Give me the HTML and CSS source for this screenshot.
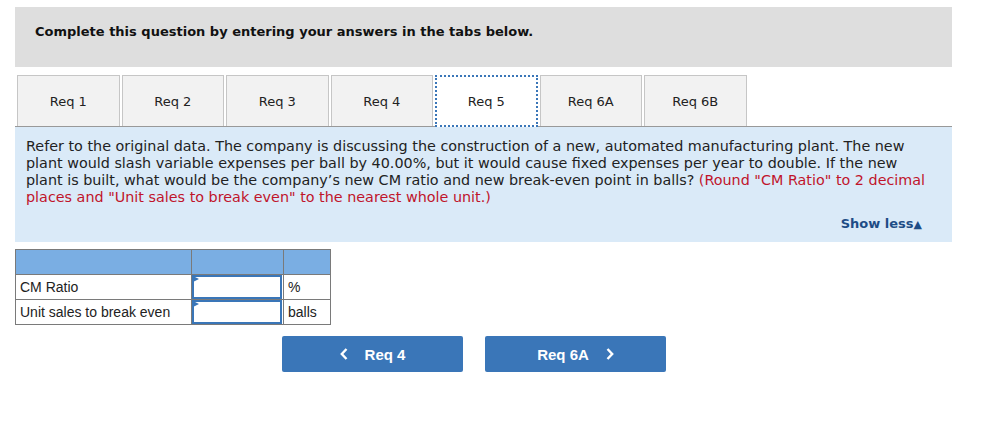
FILE: index.html
```html
<!DOCTYPE html>
<html>
<head>
<meta charset="utf-8">
<link rel="stylesheet" href="styles.css">
</head>
<body>
<div class="page">
  <div class="banner">Complete this question by entering your answers in the tabs below.</div>
  <div class="tabs">
    <div class="tab">Req 1</div>
    <div class="tab">Req 2</div>
    <div class="tab">Req 3</div>
    <div class="tab">Req 4</div>
    <div class="tab active">Req 5</div>
    <div class="tab">Req 6A</div>
    <div class="tab">Req 6B</div>
  </div>
  <div class="panel">
    <p class="question">Refer to the original data. The company is discussing the construction of a new, automated manufacturing plant. The new plant would slash variable expenses per ball by 40.00%, but it would cause fixed expenses per year to double. If the new plant is built, what would be the company’s new CM ratio and new break-even point in balls? <span class="hint">(Round "CM Ratio" to 2 decimal places and "Unit sales to break even" to the nearest whole unit.)</span></p>
    <div class="showless">Show less<span class="tri">▲</span></div>
  </div>
  <table class="answers">
    <tr class="head"><td class="c1"></td><td class="c2"></td><td class="c3"></td></tr>
    <tr><td class="c1">CM Ratio</td><td class="c2"><div class="input"></div></td><td class="c3">%</td></tr>
    <tr><td class="c1">Unit sales to break even</td><td class="c2"><div class="input"></div></td><td class="c3">balls</td></tr>
  </table>
  <div class="nav">
    <div class="btn"><svg class="chev" width="8" height="12" viewBox="0 0 8 12"><polyline points="6.5,1 1.8,6 6.5,11" fill="none" stroke="#fff" stroke-width="2.4"/></svg>Req 4</div>
    <div class="btn">Req 6A<svg class="chev right" width="8" height="12" viewBox="0 0 8 12"><polyline points="1.5,1 6.2,6 1.5,11" fill="none" stroke="#fff" stroke-width="2.4"/></svg></div>
  </div>
</div>
</body>
</html>
```
FILE: styles.css
```css
html, body {
  margin: 0;
  padding: 0;
  background: #fff;
}
.page {
  padding: 7px 0 0 15px;
  width: 937px;
  font-family: "DejaVu Sans", Verdana, sans-serif;
  color: #222;
}
.banner {
  background: #dedede;
  height: 60px;
  box-sizing: border-box;
  padding: 17px 0 0 20px;
  font-weight: bold;
  font-size: 13px;
  color: #111;
}
.tabs {
  display: flex;
  margin-top: 8px;
  border-bottom: 1px solid #999;
  padding-left: 2px;
}
.tab {
  width: 102.5px;
  height: 51px;
  box-sizing: border-box;
  margin-right: 2px;
  background: #f2f2f2;
  border: 1px solid #c6c6c6;
  border-bottom: none;
  display: flex;
  align-items: center;
  justify-content: center;
  font-size: 13px;
  color: #222;
}
.tab.active {
  background: #fff;
  border: 2px dotted #3a76b8;
  margin-bottom: -1px;
  height: 52px;
}
.panel {
  background: #daeaf8;
  height: 115px;
  box-sizing: border-box;
  padding: 11px 20px 0 11px;
  position: relative;
}
.question {
  margin: 0;
  font-size: 14.35px;
  line-height: 17px;
  color: #222;
}
.hint {
  color: #c0142b;
}
.showless {
  position: absolute;
  right: 30px;
  bottom: 11px;
  font-size: 13px;
  font-weight: bold;
  color: #1e4d86;
}
.tri {
  font-size: 11px;
}
.answers {
  margin-top: 7px;
  border-collapse: collapse;
  font-family: "Liberation Sans", Arial, sans-serif;
  font-size: 14px;
  color: #222;
}
.answers td {
  border: 1px solid #7a7a7a;
  height: 25px;
  padding: 0 4px;
  box-sizing: border-box;
}
.answers .head td {
  background: #7aaee3;
}
.answers .c1 { width: 176px; }
.answers .c2 { width: 92px; padding: 0 1px 0 0; }
.answers .c3 { width: 47px; }
.input {
  height: 24px;
  box-sizing: border-box;
  border: 2px solid #3a76b8;
  background: #fff;
  position: relative;
}
.input::before {
  content: "";
  position: absolute;
  left: -1px;
  top: -1px;
  border-left: 6px solid #3a76b8;
  border-top: 3px solid transparent;
  border-bottom: 3px solid transparent;
}
.nav {
  display: flex;
  gap: 22px;
  margin: 11px 0 0 267px;
}
.btn {
  width: 181px;
  height: 36px;
  background: #3a76b8;
  border-radius: 2px;
  color: #fff;
  font-family: "Liberation Sans", Arial, sans-serif;
  font-weight: bold;
  font-size: 15px;
  display: flex;
  align-items: center;
  justify-content: center;
}
.chev {
  margin-right: 17px;
}
.chev.right {
  margin-right: 0;
  margin-left: 17px;
}
```
